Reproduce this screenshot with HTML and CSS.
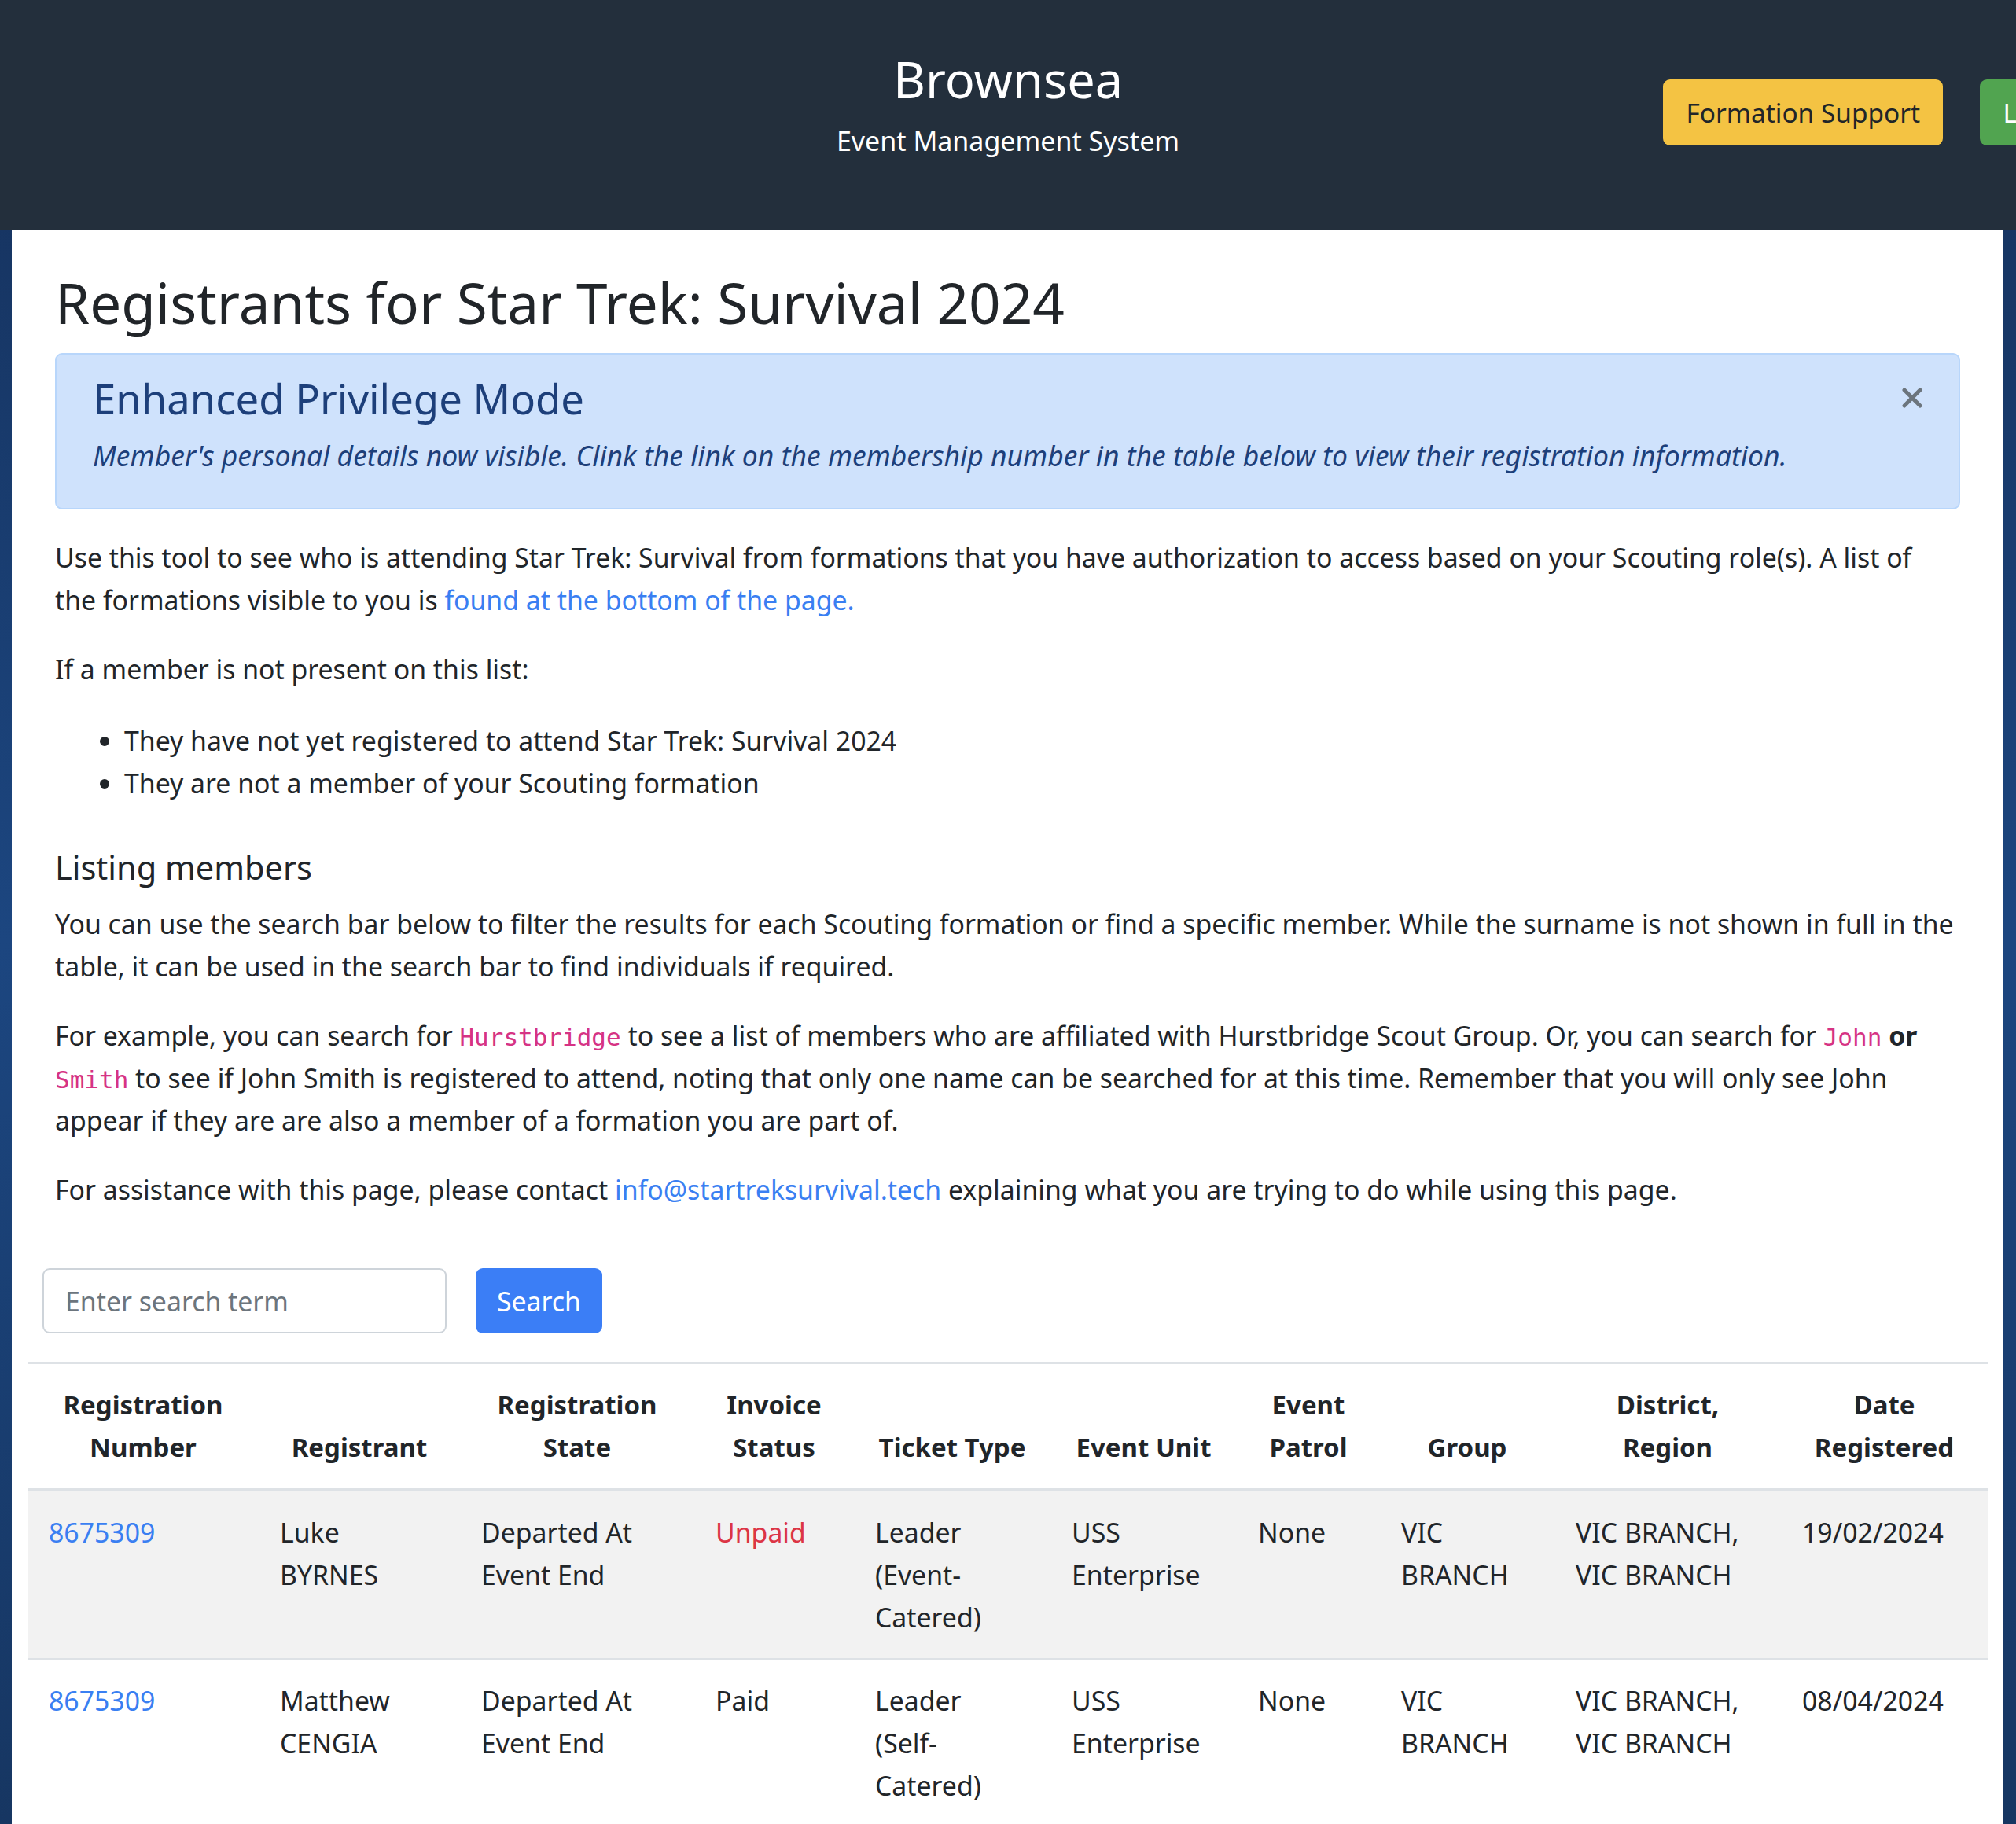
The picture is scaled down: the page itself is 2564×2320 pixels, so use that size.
FILE: index.html
```html
<!DOCTYPE html>
<html lang="en">
<head>
<meta charset="utf-8">
<title>Brownsea - Registrants</title>
<link rel="stylesheet" href="styles.css">
</head>
<body>
<header class="topbar">
  <div class="topbar-spacer"></div>
  <div class="brand">
    <h1 class="brand-title">Brownsea</h1>
    <p class="brand-sub">Event Management System</p>
  </div>
  <nav class="topbar-actions">
    <a class="btn btn-warning" href="#">Formation Support</a>
    <a class="btn btn-success" href="#">Logout</a>
  </nav>
</header>

<main class="page">
  <section class="intro">
    <h1 class="page-title">Registrants for Star Trek: Survival 2024</h1>

    <div class="alert">
      <h3 class="alert-title">Enhanced Privilege Mode</h3>
      <p class="alert-text">Member's personal details now visible. Clink the link on the membership number in the table below to view their registration information.</p>
      <button class="alert-close" type="button" aria-label="Close">
        <svg viewBox="0 0 26 26" width="26" height="26"><path d="M3 3 L23 23 M23 3 L3 23" /></svg>
      </button>
    </div>

    <p>Use this tool to see who is attending Star Trek: Survival from formations that you have authorization to access based on your Scouting role(s). A list of the formations visible to you is <a href="#">found at the bottom of the page.</a></p>
    <p>If a member is not present on this list:</p>
    <ul class="reasons">
      <li>They have not yet registered to attend Star Trek: Survival 2024</li>
      <li>They are not a member of your Scouting formation</li>
    </ul>

    <h4 class="section-title">Listing members</h4>
    <p>You can use the search bar below to filter the results for each Scouting formation or find a specific member. While the surname is not shown in full in the table, it can be used in the search bar to find individuals if required.</p>
    <p>For example, you can search for <code>Hurstbridge</code> to see a list of members who are affiliated with Hurstbridge Scout Group. Or, you can search for <code>John</code> <b>or</b> <code>Smith</code> to see if John Smith is registered to attend, noting that only one name can be searched for at this time. Remember that you will only see John appear if they are are also a member of a formation you are part of.</p>
    <p>For assistance with this page, please contact <a href="#">info@startreksurvival.tech</a> explaining what you are trying to do while using this page.</p>
  </section>

  <form class="search">
    <input class="search-input" type="text" placeholder="Enter search term">
    <button class="search-btn" type="button">Search</button>
  </form>

  <table class="registrants">
    <colgroup>
      <col class="c-num"><col class="c-name"><col class="c-state"><col class="c-inv"><col class="c-ticket">
      <col class="c-unit"><col class="c-patrol"><col class="c-group"><col class="c-district"><col class="c-date">
    </colgroup>
    <thead>
      <tr>
        <th>Registration Number</th>
        <th>Registrant</th>
        <th>Registration State</th>
        <th>Invoice Status</th>
        <th>Ticket Type</th>
        <th>Event Unit</th>
        <th>Event Patrol</th>
        <th>Group</th>
        <th>District, Region</th>
        <th>Date Registered</th>
      </tr>
    </thead>
    <tbody>
      <tr>
        <td><a href="#">8675309</a></td>
        <td>Luke BYRNES</td>
        <td>Departed At Event End</td>
        <td class="unpaid">Unpaid</td>
        <td>Leader (Event-Catered)</td>
        <td>USS Enterprise</td>
        <td>None</td>
        <td>VIC BRANCH</td>
        <td>VIC BRANCH, VIC BRANCH</td>
        <td>19/02/2024</td>
      </tr>
      <tr>
        <td><a href="#">8675309</a></td>
        <td>Matthew CENGIA</td>
        <td>Departed At Event End</td>
        <td>Paid</td>
        <td>Leader (Self-Catered)</td>
        <td>USS Enterprise</td>
        <td>None</td>
        <td>VIC BRANCH</td>
        <td>VIC BRANCH, VIC BRANCH</td>
        <td>08/04/2024</td>
      </tr>
    </tbody>
  </table>
</main>
</body>
</html>
```
FILE: styles.css
```css
* { box-sizing: border-box; }
html, body { margin: 0; }
body {
  font-family: "Noto Sans", Lato, sans-serif;
  font-size: 33.8px;
  line-height: 54px;
  color: #212529;
  background: #17335f linear-gradient(180deg, #15305a 0%, #1c4680 50%, #163560 100%);
  overflow-x: hidden;
  min-height: 2320px;
}
a { color: #3a7ff2; text-decoration: none; }

.topbar {
  height: 293px;
  background: #232f3c;
  display: grid;
  grid-template-columns: 1fr auto 1fr;
  align-items: start;
  padding-top: 63px;
}
.brand { text-align: center; color: #fff; }
.brand-title { font-size: 63px; line-height: 1.2; font-weight: 400; margin: 0 0 13px; }
.brand-sub { font-size: 34px; line-height: 54px; margin: 0; }
.topbar-actions {
  display: flex;
  justify-content: flex-end;
  gap: 47px;
  margin-top: 38px;
  margin-right: -124px;
}
.btn {
  display: inline-flex;
  align-items: center;
  justify-content: center;
  height: 84px;
  padding: 0 27px;
  border: 2px solid transparent;
  border-radius: 9px;
  font-size: 33.4px;
  white-space: nowrap;
}
.btn-warning { background: #f4c343; color: #212529; }
.btn-success { background: #51a450; color: #fff; width: 170px; }

.page {
  background: #fff;
  margin: 0 16px 0 15px;
  padding: 20px 20px 60px;
  min-height: 2100px;
}
.intro { padding: 0 35px; }
.intro > p { margin-right: 5px; }
.page-title { font-size: 71px; line-height: 1.2; font-weight: 400; margin: 29px 0 22px; }

.alert {
  position: relative;
  background: #cfe2fc;
  border: 2px solid #b8d6fb;
  border-radius: 9px;
  padding: 24px 46px 24px;
  color: #1d3f7a;
  margin-bottom: 34px;
}
.alert-title { font-size: 52.6px; line-height: 1.2; font-weight: 400; margin: 0 0 14px; }
.alert-text { font-style: italic; font-size: 35.5px; margin: 0 0 16px; }
.alert-close {
  position: absolute;
  top: 42px;
  right: 46px;
  width: 26px;
  height: 26px;
  padding: 0;
  border: 0;
  background: none;
}
.alert-close svg { display: block; }
.alert-close path { stroke: #6c757d; stroke-width: 5; stroke-linecap: round; fill: none; }

p { margin: 0 0 34px; }
.reasons { margin: 37px 0 34px; padding-left: 88px; }
.section-title { font-size: 41.5px; line-height: 1.2; font-weight: 400; margin: 56px 0 19px; }
code {
  font-family: "DejaVu Sans Mono", "Liberation Mono", monospace;
  font-size: 31px;
  line-height: 1;
  color: #d63384;
}

.search { display: flex; gap: 37px; margin: 73px 0 37px 19px; }
.search-input {
  width: 514px;
  height: 83px;
  border: 2px solid #ced4da;
  border-radius: 9px;
  padding: 0 27px;
  font: inherit;
  color: #495057;
}
.search-input::placeholder { color: #6c757d; }
.search-btn {
  height: 83px;
  padding: 0 27px;
  border: 0;
  border-radius: 9px;
  background: #3b7ef6;
  color: #fff;
  font: inherit;
}

.registrants { width: 100%; border-collapse: collapse; table-layout: fixed; }
.c-num { width: 294px; }
.c-name { width: 256px; }
.c-state { width: 298px; }
.c-inv { width: 203px; }
.c-ticket { width: 250px; }
.c-unit { width: 237px; }
.c-patrol { width: 182px; }
.c-group { width: 222px; }
.c-district { width: 288px; }
.c-date { width: 263px; }
.registrants th,
.registrants td {
  padding: 25px 27px;
  border-top: 2px solid #dee2e6;
  text-align: left;
  vertical-align: top;
  font-weight: 400;
}
.registrants thead th {
  vertical-align: bottom;
  text-align: center;
  font-weight: 700;
  font-size: 33px;
  border-bottom: 4px solid #dee2e6;
}
.registrants tbody tr:nth-child(odd) { background: #f2f2f2; }
.unpaid { color: #dc3545; }
```
